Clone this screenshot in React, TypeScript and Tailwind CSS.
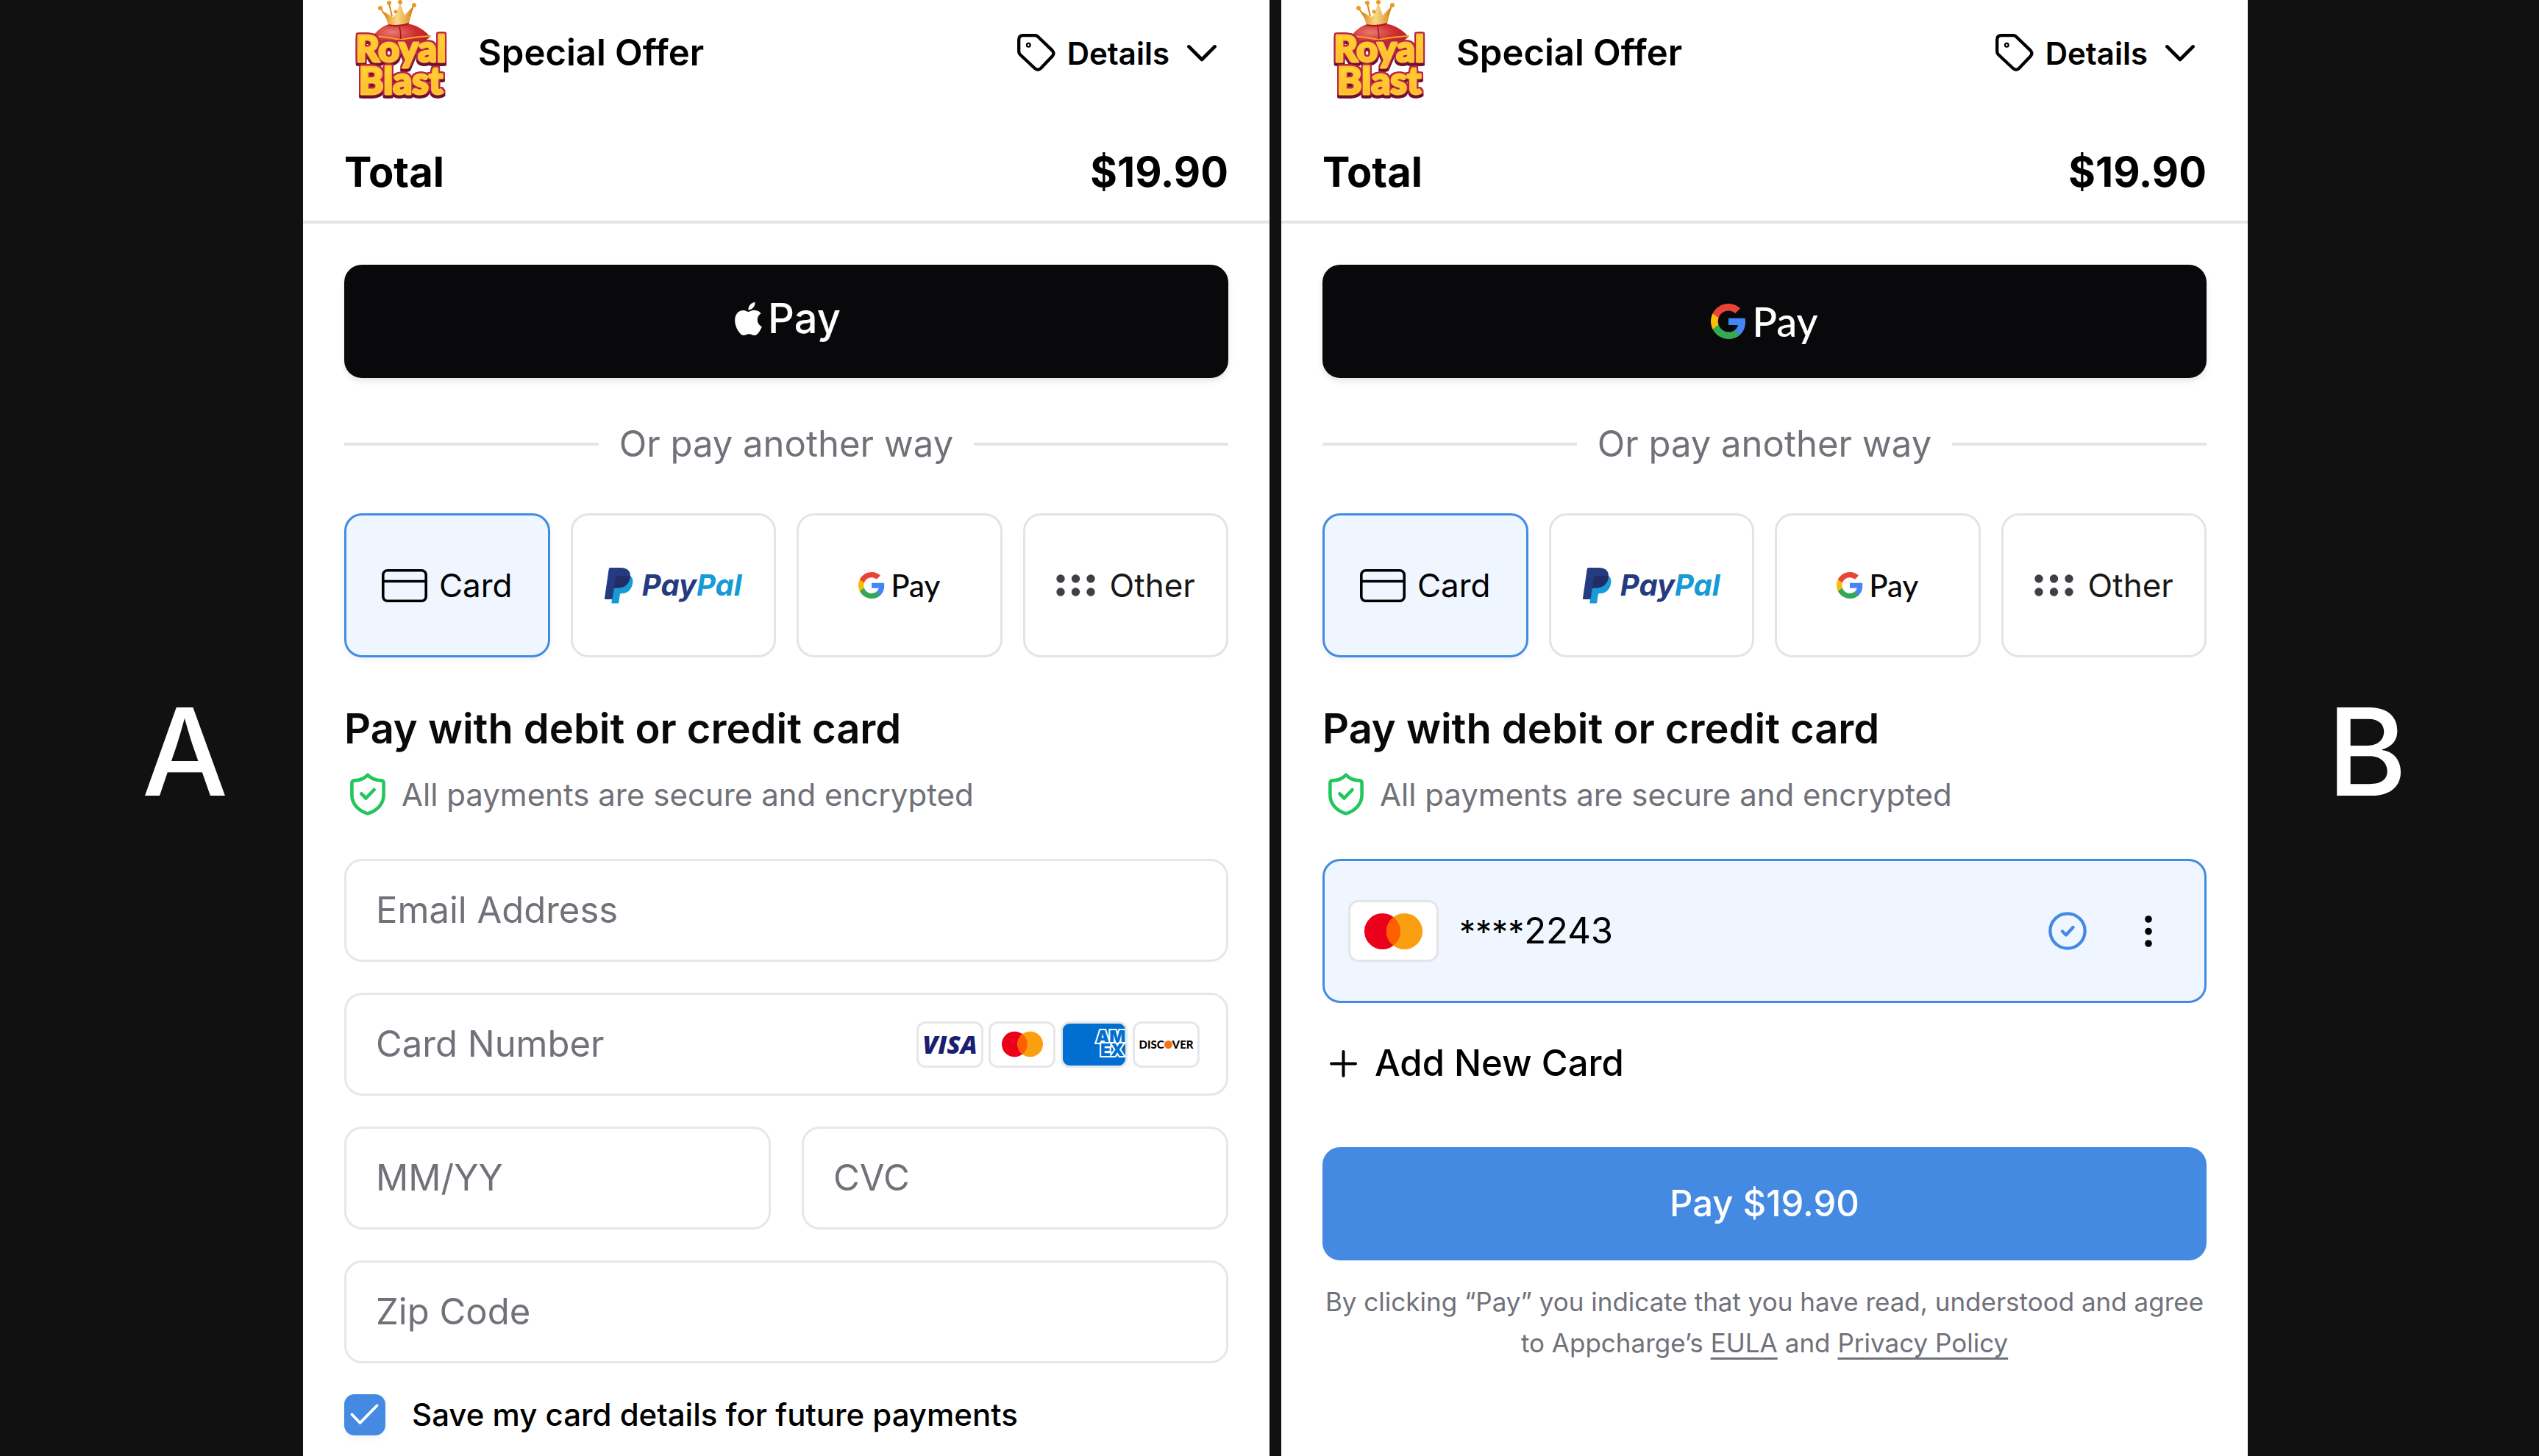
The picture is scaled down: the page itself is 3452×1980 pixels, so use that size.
import {useState} from 'react';
import type {ReactNode} from 'react';

import clsx from 'clsx';
import {SiApple} from 'react-icons/si';

function RoyalBlastLogo() {
  return (
    <svg width="130" height="138" viewBox="0 0 130 138" role="img" aria-label="Royal Blast">
      <defs>
        <linearGradient id="rbGold" x1="0" y1="0" x2="1" y2="0">
          <stop offset="0" stopColor="#e08a1e" />
          <stop offset="0.45" stopColor="#fbd98a" />
          <stop offset="1" stopColor="#d98618" />
        </linearGradient>
        <radialGradient id="rbPillow" cx="0.35" cy="0.35" r="0.8">
          <stop offset="0" stopColor="#ea7a72" />
          <stop offset="0.5" stopColor="#cf2f30" />
          <stop offset="1" stopColor="#a81820" />
        </radialGradient>
        <linearGradient id="rbLetters" x1="0" y1="0" x2="0" y2="1">
          <stop offset="0" stopColor="#ffe135" />
          <stop offset="1" stopColor="#ffb02e" />
        </linearGradient>
      </defs>
      <path d="M26 50 C34 40 42 34 50 33 H78 C88 35 97 41 105 50 C98 56 92 60 64 64 C44 62 34 58 26 50Z" fill="url(#rbPillow)" />
      <path d="M63 36 Q66 48 64 62" fill="none" stroke="#9c141c" strokeWidth="1.5" />
      <path d="M26 49 Q46 50 64 54 Q84 50 106 49" fill="none" stroke="#f0a52b" strokeWidth="2" />
      <path d="M48 34 L42 16 L54 23 L58 20 L64 4 L70 21 L82 8 L76 32 Q62 36 48 34Z" fill="url(#rbGold)" />
      <path d="M48 34 Q62 37 76 32" fill="none" stroke="#a81820" strokeWidth="2" />
      <path d="M37 11 L46 24 M49 5 L53 22 M82 8 L77 22" stroke="#d98618" strokeWidth="2" />
      <g fill="#eb9a24">
        <circle cx="37" cy="11" r="3" />
        <circle cx="49" cy="4" r="3" />
        <circle cx="64" cy="3" r="3" />
        <circle cx="83" cy="7" r="3" />
        <circle cx="58" cy="16" r="2.5" />
      </g>
      <g
        className="font-[Lato,sans-serif] font-black [filter:drop-shadow(2px_0_0_#b8234a)_drop-shadow(-2px_0_0_#b8234a)_drop-shadow(0_-2px_0_#b8234a)_drop-shadow(0_4px_0_#6b1030)]"
        fill="url(#rbLetters)"
        stroke="#ffc62f"
        strokeWidth="3"
        strokeLinejoin="round"
        textAnchor="middle"
      >
        <text x="65" y="84" fontSize="50">Royal</text>
        <text x="65" y="128" fontSize="51">Blast</text>
      </g>
    </svg>
  );
}

function GoogleG({className = ''}: {className?: string}) {
  return (
    <svg className={className} viewBox="1 1 22 22" aria-hidden="true">
      <path fill="#4285F4" d="M22.56 12.25c0-.78-.07-1.53-.2-2.25H12v4.26h5.92c-.26 1.37-1.04 2.53-2.21 3.31v2.77h3.57c2.08-1.92 3.28-4.74 3.28-8.09z" />
      <path fill="#34A853" d="M12 23c2.97 0 5.46-.98 7.28-2.66l-3.57-2.77c-.98.66-2.23 1.06-3.71 1.06-2.86 0-5.29-1.93-6.16-4.53H2.18v2.84C3.99 20.53 7.7 23 12 23z" />
      <path fill="#FBBC05" d="M5.84 14.09c-.22-.66-.35-1.36-.35-2.09s.13-1.43.35-2.09V7.07H2.18C1.43 8.55 1 10.22 1 12s.43 3.45 1.18 4.93l2.85-2.22.81-.62z" />
      <path fill="#EA4335" d="M12 5.38c1.62 0 3.06.56 4.21 1.64l3.15-3.15C17.45 2.09 14.97 1 12 1 7.7 1 3.99 3.47 2.18 7.07l3.66 2.84c.87-2.6 3.3-4.53 6.16-4.53z" />
    </svg>
  );
}

function Mastercard({className = ''}: {className?: string}) {
  return (
    <svg className={className} viewBox="0 0 79 49" role="img" aria-label="Mastercard">
      <circle cx="24.5" cy="24.5" r="24.5" fill="#eb001b" />
      <circle cx="54.5" cy="24.5" r="24.5" fill="#f99f10" />
      <path d="M39.5 5.1A24.5 24.5 0 0 1 39.5 43.9A24.5 24.5 0 0 1 39.5 5.1Z" fill="#ff5f00" />
    </svg>
  );
}

function TagIcon() {
  return (
    <svg width="52" height="52" viewBox="0 0 52 52" fill="none" stroke="currentColor" strokeWidth="4.3" aria-hidden="true">
      <path d="M8 2.2H24Q26.5 2.2 28.3 4L47.6 22.6Q51.2 26.6 47.6 30.6L32 47Q28 50.6 24 47L4 28.3Q2.2 26.5 2.2 24V8Q2.2 2.2 8 2.2Z" />
      <circle cx="15.3" cy="15.2" r="2.4" strokeWidth="2.2" />
    </svg>
  );
}

function ShieldIcon() {
  return (
    <svg width="48" height="58" viewBox="0 0 48 58" fill="none" stroke="#22c55e" strokeWidth="4.6" strokeLinecap="round" strokeLinejoin="round" aria-hidden="true">
      <path d="M24 2.8C29 8 35 10.2 42 10.4Q45.6 10.6 45.6 14V30C45.6 42 37 51.5 24 55.4C11 51.5 2.4 42 2.4 30V14Q2.4 10.6 6 10.4C13 10.2 19 8 24 2.8Z" />
      <path d="M15.5 28.5L21.5 34.5L32.5 23" />
    </svg>
  );
}

function PayPalLogo() {
  return (
    <span className="flex items-center gap-3">
      <svg width="39" height="49" viewBox="0 0 39 49" aria-hidden="true">
        <path fill="#179bd7" d="M15 11H35C38.5 14 39 18 38 22C36.4 31 30 35 24 35H22.5Q21 35 20.8 36.5L19.4 47Q19.2 48.5 17.7 48.5H10.5Q9.2 48.5 9.4 47Z" />
        <path fill="#253b80" d="M7.5 0H22C31 0 36 5 34.8 13C33.3 23 26 27.5 18 27.5H14.5Q13 27.5 12.7 29L10.6 43H1Q-.2 43 0 41.6L5.8 1.5Q6 0 7.5 0Z" />
        <path fill="#222d65" d="M16.5 11H34.9C34.6 22 27 27.5 18 27.5H14.5Q13 27.5 12.7 29L15 12.4Q15.2 11 16.5 11Z" />
      </svg>
      <span className="flex text-[40px] leading-none font-bold text-[#253b80] italic">
        <span>Pay</span>
        <span className="text-[#179bd7]">Pal</span>
      </span>
    </span>
  );
}

function CardBadge({className = 'bg-white', children}: {className?: string; children: ReactNode}) {
  return (
    <span className={clsx('flex h-[63px] w-[91px] items-center justify-center overflow-hidden rounded-xl border-[3px] border-[#e5e7eb]', className)}>
      {children}
    </span>
  );
}

function CardBrands() {
  return (
    <div className="flex gap-[7px]">
      <CardBadge>
        <span className="font-['Open_Sans',sans-serif] text-[34px] leading-none font-extrabold text-[#1a1f71] italic">VISA</span>
      </CardBadge>
      <CardBadge>
        <Mastercard className="h-9 w-14" />
      </CardBadge>
      <CardBadge className="bg-[#006fcf]">
        <svg width="85" height="57" viewBox="0 0 85 57" role="img" aria-label="American Express">
          <g fill="#006fcf" stroke="#fff" strokeWidth="4" paintOrder="stroke" fontSize="23" className="font-black">
            <text x="45" y="26">AM</text>
            <text x="51" y="44">EX</text>
          </g>
        </svg>
      </CardBadge>
      <CardBadge>
        <span className="flex items-center font-[Lato,sans-serif] text-[15px] leading-none font-black text-black">
          <span>DISC</span>
          <span className="size-[11px] rounded-full bg-[#f47216]"></span>
          <span>VER</span>
        </span>
      </CardBadge>
    </div>
  );
}

function OrderSummary() {
  return (
    <header className="border-b-4 border-[#e4e4e7] px-14 pb-6">
      <div className="flex h-36 items-center justify-between">
        <div className="flex items-center gap-10 self-stretch pl-3">
          <div className="self-start">
            <RoyalBlastLogo />
          </div>
          <span className="text-[49px] font-semibold">Special Offer</span>
        </div>
        <button type="button" className="flex items-center pr-4">
          <TagIcon />
          <span className="mr-6 ml-4 text-[42px] font-semibold">Details</span>
          <svg width="40" height="23" viewBox="0 0 40 23" fill="none" stroke="currentColor" strokeWidth="4.6" strokeLinecap="round" strokeLinejoin="round" aria-hidden="true">
            <path d="M2.4 2.4L20 20L37.6 2.4" />
          </svg>
        </button>
      </div>
      <div className="flex justify-between pt-12 text-[56px] leading-[84px] font-bold">
        <span>Total</span>
        <span>$19.90</span>
      </div>
    </header>
  );
}

function PaymentTile({active, onClick, children}: {active: boolean; onClick: () => void; children: ReactNode}) {
  return (
    <button
      type="button"
      aria-pressed={active}
      onClick={onClick}
      className={clsx(
        'flex h-49 items-center justify-center rounded-3xl border-[3px] text-[44px]',
        active ? 'border-[#448ae3] bg-[#eff6ff] shadow-[0_4px_8px_#0000000d]' : 'border-[#e4e4e7] bg-white',
      )}
    >
      {children}
    </button>
  );
}

function PaymentMethods() {
  const [method, setMethod] = useState('card');
  return (
    <div className="mt-15 grid grid-cols-4 gap-7">
      <PaymentTile active={method === 'card'} onClick={() => setMethod('card')}>
        <svg width="62" height="45" viewBox="0 0 62 45" fill="none" stroke="currentColor" strokeWidth="3.6" aria-hidden="true">
          <rect x="1.8" y="1.8" width="58.4" height="41.4" rx="6" />
          <path d="M2 16.5H60" />
        </svg>
        <span className="ml-4">Card</span>
      </PaymentTile>
      <PaymentTile active={method === 'paypal'} onClick={() => setMethod('paypal')}>
        <PayPalLogo />
      </PaymentTile>
      <PaymentTile active={method === 'gpay'} onClick={() => setMethod('gpay')}>
        <GoogleG className="size-9" />
        <span className="ml-2 font-[Lato,sans-serif] text-[42px] font-medium text-[#09090b]">Pay</span>
      </PaymentTile>
      <PaymentTile active={method === 'other'} onClick={() => setMethod('other')}>
        <svg width="53" height="30" viewBox="0 0 53 30" fill="#3f3f46" aria-hidden="true">
          <circle cx="6" cy="6" r="5.7" />
          <circle cx="26.5" cy="6" r="5.7" />
          <circle cx="47" cy="6" r="5.7" />
          <circle cx="6" cy="24" r="5.7" />
          <circle cx="26.5" cy="24" r="5.7" />
          <circle cx="47" cy="24" r="5.7" />
        </svg>
        <span className="ml-5 text-[#18181b]">Other</span>
      </PaymentTile>
    </div>
  );
}

function Field({label, className = '', children}: {label: string; className?: string; children?: ReactNode}) {
  return (
    <label className={clsx('flex h-35 items-center rounded-3xl border-[3px] border-[#e5e7eb] bg-white pr-9 pl-10', className)}>
      <input
        type="text"
        aria-label={label}
        placeholder={label}
        className="w-full min-w-0 flex-1 text-[49px] outline-none placeholder:text-[#71717a] placeholder:opacity-100"
      />
      {children}
    </label>
  );
}

function NewCardForm() {
  return (
    <form className="mt-[58px] grid grid-cols-2 gap-[42px]">
      <Field label="Email Address" className="col-span-2" />
      <Field label="Card Number" className="col-span-2">
        <CardBrands />
      </Field>
      <Field label="MM/YY" />
      <Field label="CVC" />
      <Field label="Zip Code" className="col-span-2" />
      <label className="col-span-2 flex items-center gap-9 text-[42px] leading-[56px] font-medium">
        <span className="grid size-14">
          <input
            type="checkbox"
            defaultChecked
            className="peer col-start-1 row-start-1 size-14 appearance-none rounded-[14px] border-[3px] border-[#e5e7eb] shadow-[0_4px_8px_#0000000d] checked:border-[#448ae3] checked:bg-[#448ae3]"
          />
          <svg className="pointer-events-none invisible col-start-1 row-start-1 peer-checked:visible" viewBox="0 0 56 56" fill="none" stroke="#fff" strokeWidth="3.8" strokeLinecap="round" strokeLinejoin="round" aria-hidden="true">
            <path d="M10.5 27.5L21.5 39L44.5 15.5" />
          </svg>
        </span>
        Save my card details for future payments
      </label>
    </form>
  );
}

const legalLink = 'underline decoration-[3px] underline-offset-[7px] [text-decoration-skip-ink:none]';

function SavedCard() {
  return (
    <>
      <div className="mt-[58px] flex h-49 items-center rounded-3xl border-[3px] border-[#448ae3] bg-[#eff6ff] pl-8">
        <span className="flex h-21 w-[123px] items-center justify-center rounded-[14px] border-[3px] border-[#e4e4e7] bg-white">
          <Mastercard className="h-[49px] w-[79px]" />
        </span>
        <span className="ml-7 flex flex-1 items-baseline text-[49px]">
          <span className="text-[44px]">****</span>
          <span>2243</span>
        </span>
        <svg width="52" height="52" viewBox="0 0 52 52" fill="none" stroke="#448ae3" strokeWidth="4.3" strokeLinecap="round" strokeLinejoin="round" role="img" aria-label="Selected">
          <circle cx="26" cy="26" r="23.6" />
          <path d="M19 26.5L24 31.5L33.5 21" />
        </svg>
        <button type="button" aria-label="Card options" className="mr-12 ml-14 flex w-14 justify-center">
          <svg width="10" height="43" viewBox="0 0 10 43" aria-hidden="true">
            <circle cx="5" cy="5" r="4.8" />
            <circle cx="5" cy="21.5" r="4.8" />
            <circle cx="5" cy="38" r="4.8" />
          </svg>
        </button>
      </div>
      <button type="button" className="mt-12 flex items-center self-start pl-[10px] text-[49px] leading-[68px] font-medium">
        <svg width="37" height="37" viewBox="0 0 37 37" stroke="currentColor" strokeWidth="4" strokeLinecap="round" aria-hidden="true">
          <path d="M18.5 2V35M2 18.5H35" />
        </svg>
        <span className="ml-6">Add New Card</span>
      </button>
      <button type="button" className="mt-20 h-[154px] rounded-3xl bg-[#448ae3] text-[49px] font-medium text-white">
        Pay $19.90
      </button>
      <p className="mt-7 flex flex-wrap justify-center gap-x-[10px] text-[35px] leading-[56px] text-[#71717a]">
        <span>By clicking “Pay” you indicate that you have read, understood and agree</span>
        <span>to Appcharge’s</span>
        <a href="#eula" className={legalLink}>EULA</a>
        <span>and</span>
        <a href="#privacy" className={legalLink}>Privacy Policy</a>
      </p>
    </>
  );
}

function Checkout({express, children}: {express: ReactNode; children: ReactNode}) {
  return (
    <section className="bg-white">
      <OrderSummary />
      <div className="flex flex-col px-14 pt-14">
        {express}
        <div className="mt-14 flex items-center gap-7 text-[49px] leading-[68px] text-[#71717a]">
          <hr className="flex-1 border-t-4 border-[#e4e4e7]" />
          Or pay another way
          <hr className="flex-1 border-t-4 border-[#e4e4e7]" />
        </div>
        <PaymentMethods />
        <h2 className="mt-14 text-[56px] leading-[82px] font-semibold text-[#09090b]">Pay with debit or credit card</h2>
        <div className="mt-[18px] flex h-15 items-center gap-[22px] pl-2 text-[42px] text-[#71717a]">
          <ShieldIcon />
          All payments are secure and encrypted
        </div>
        {children}
      </div>
    </section>
  );
}

const expressButton = 'flex h-[154px] items-center justify-center rounded-3xl bg-[#09090b] text-[56px] leading-none text-white shadow-[0_4px_8px_#0000001a]';

export default function App() {
  return (
    <main className="grid min-h-screen grid-cols-[412fr_2644fr_396fr] bg-[#111] font-[Inter,sans-serif] text-black">
      <div className="flex items-center justify-end pt-16 pr-[102px] text-[165px] leading-none font-medium text-white">A</div>
      <div className="grid grid-cols-2 gap-4">
        <Checkout
          express={
            <button type="button" className={clsx(expressButton, 'pb-2')}>
              <SiApple className="size-[45px]" aria-label="Apple" />
              <span className="ml-1 font-medium">Pay</span>
            </button>
          }
        >
          <NewCardForm />
        </Checkout>
        <Checkout
          express={
            <button type="button" className={expressButton}>
              <GoogleG className="size-12" />
              <span className="ml-2 font-[Lato,sans-serif] font-medium">Pay</span>
            </button>
          }
        >
          <SavedCard />
        </Checkout>
      </div>
      <div className="flex items-center pt-16 pl-27 text-[165px] leading-none font-medium text-white">B</div>
    </main>
  );
}
